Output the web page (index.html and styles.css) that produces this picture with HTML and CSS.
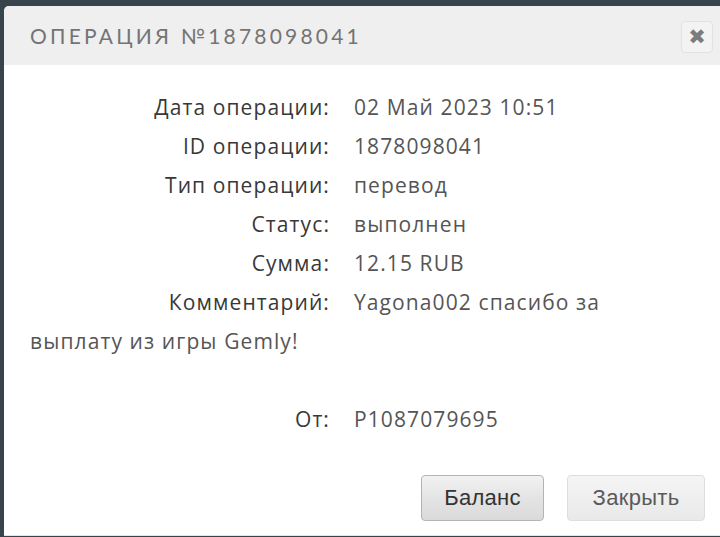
FILE: index.html
```html
<!DOCTYPE html>
<html lang="ru">
<head>
<meta charset="utf-8">
<title>Операция</title>
<link rel="stylesheet" href="styles.css">
</head>
<body>
<div class="dialog">
  <div class="header">
    <span class="title">ОПЕРАЦИЯ №1878098041</span>
    <span class="close">&#x2716;</span>
  </div>
  <div class="content">
    <div class="row"><span class="label">Дата операции:</span><span class="value">02 Май 2023 10:51</span></div>
    <div class="row"><span class="label">ID операции:</span><span class="value">1878098041</span></div>
    <div class="row"><span class="label">Тип операции:</span><span class="value">перевод</span></div>
    <div class="row"><span class="label">Статус:</span><span class="value">выполнен</span></div>
    <div class="row"><span class="label">Сумма:</span><span class="value">12.15 RUB</span></div>
    <div class="row"><span class="label">Комментарий:</span><span class="value">Yagona002 спасибо за выплату из игры Gemly!</span></div>
    <div class="row empty"></div>
    <div class="row"><span class="label">От:</span><span class="value">P1087079695</span></div>
  </div>
  <div class="footer">
    <button class="btn btn-primary">Баланс</button>
    <button class="btn btn-light">Закрыть</button>
  </div>
</div>
</body>
</html>
```
FILE: styles.css
```css
html, body {
  margin: 0;
  padding: 0;
  height: 100%;
}
body {
  background: #37444c;
  overflow: hidden;
}
.dialog {
  margin: 6px 0 0 4px;
  height: 530px;
  background: #ffffff;
  border-top-left-radius: 5px;
  display: flex;
  flex-direction: column;
  overflow: hidden;
}
.header {
  height: 59px;
  background: #efefef;
  display: flex;
  align-items: center;
  justify-content: space-between;
  padding: 0 7px 0 26px;
  flex-shrink: 0;
}
.title {
  font-family: "Lato", "Liberation Sans", sans-serif;
  font-size: 21px;
  letter-spacing: 3.2px;
  color: #747474;
}
.close {
  width: 30px;
  height: 30px;
  border: 1px solid #e2e2e2;
  border-radius: 4px;
  background: #f3f3f3;
  display: flex;
  align-items: center;
  justify-content: center;
  color: #7c7c7c;
  font-family: "DejaVu Sans", sans-serif;
  font-size: 21px;
  margin-top: 2px;
}
.content {
  padding: 23px 40px 0 26px;
  font-family: "Open Sans", sans-serif;
  font-size: 21px;
  letter-spacing: 1.1px;
  line-height: 39px;
  color: #555555;
}
.row {
  min-height: 39px;
}
.label {
  display: inline-block;
  width: 300px;
  text-align: right;
  margin-right: 24px;
  color: #383838;
}
.footer {
  margin-top: auto;
  display: flex;
  justify-content: flex-end;
  gap: 23px;
  padding: 0 15px 14px 0;
  border-bottom: 1px solid #e4e4e4;
}
.btn {
  height: 46px;
  border-radius: 4px;
  font-family: "Liberation Sans", Arial, sans-serif;
  font-size: 22px;
  letter-spacing: 0.3px;
  padding: 0;
}
.btn-primary {
  width: 123px;
  border: 1px solid #b4b4b4;
  background: linear-gradient(#f2f2f2, #e4e4e4 50%, #dadada);
  color: #333333;
}
.btn-light {
  width: 138px;
  border: 1px solid #dedede;
  background: linear-gradient(#f5f5f5, #efefef 50%, #e9e9e9);
  color: #5a5a5a;
}
```
